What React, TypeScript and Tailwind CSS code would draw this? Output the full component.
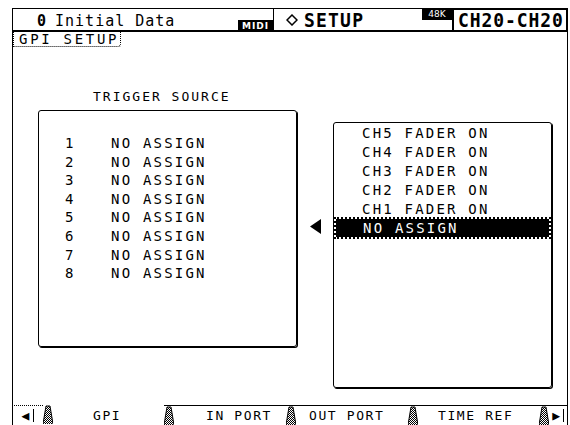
import React from "react";

const sources = [1, 2, 3, 4, 5, 6, 7, 8];
const options = ["CH5 FADER ON", "CH4 FADER ON", "CH3 FADER ON", "CH2 FADER ON", "CH1 FADER ON"];

const Hatch = () => (
  <svg width="10" height="19" viewBox="0 0 10 19" className="shrink-0">
    <defs>
      <pattern id="chk" width="2" height="2" patternUnits="userSpaceOnUse">
        <rect width="1" height="1" fill="#000" />
        <rect x="1" y="1" width="1" height="1" fill="#000" />
      </pattern>
    </defs>
    <polygon points="3,1 7,1 10,19 0,19" fill="url(#chk)" />
    <polyline points="0,19 3,1 7,1 10,19" fill="none" stroke="#000" strokeWidth="1" />
  </svg>
);

const Tab = ({ label, w, pl, active }: { label: string; w: string; pl: string; active?: boolean }) => (
  <div className={`${w} ${pl} flex h-full items-center border-t ${active ? "border-transparent" : "border-black"}`}>
    <span className="text-[13px] leading-none tracking-[1.6px] whitespace-nowrap">{label}</span>
  </div>
);

export default function App() {
  return (
    <div className="w-[570px] h-[425px] bg-white text-black overflow-hidden pl-3 pt-2 flex flex-col font-['DejaVu_Sans_Mono',monospace]">
      {/* header */}
      <div className="flex h-6 w-[556px] shrink-0">
        <div className="w-[262px] border-l border-t border-r border-b-2 border-black flex items-end justify-between">
          <div className="flex items-baseline pl-[24px] pb-[1px] leading-none">
            <span className="text-[15px] font-bold">0</span>
            <span className="ml-[9px] text-[15px] tracking-[1px]">Initial Data</span>
          </div>
          <div className="bg-black text-white h-[12px] w-[35px] flex items-end justify-center mb-[-2px]">
            <span className="text-[9px] font-bold leading-none tracking-[1px] pb-[1px] font-['DejaVu_Sans',sans-serif]">MIDI</span>
          </div>
        </div>
        <div className="w-[148px] border-t border-b-2 border-black flex items-center pl-[12px]">
          <svg width="12" height="12" viewBox="0 0 12 12" className="mr-[6px]">
            <polygon points="6,1 11,6 6,11 1,6" fill="none" stroke="#000" strokeWidth="1.5" />
          </svg>
          <span className="text-[18px] font-bold leading-none tracking-[1.2px] scale-y-110">SETUP</span>
        </div>
        <div className="w-[30px] border-b-2 border-black flex flex-col">
          <div className="bg-black text-white h-[12px] flex items-center justify-center">
            <span className="text-[9px] leading-none font-['DejaVu_Sans',sans-serif]">48K</span>
          </div>
        </div>
        <div className="w-[116px] border-2 border-black flex items-center pl-[4px] overflow-hidden">
          <span className="text-[18px] font-bold leading-none tracking-[0.9px] scale-y-110 whitespace-nowrap">CH20-CH20</span>
        </div>
      </div>

      {/* page frame */}
      <div className="w-[556px] flex-1 border-l border-r border-black flex flex-col">
        <div className="flex shrink-0">
          <div className="h-[15px] w-[108px] pl-[5px] border-b border-r border-l border-dotted border-black rounded-br-[3px] flex items-center">
            <span className="text-[14px] leading-none tracking-[2.7px] whitespace-nowrap">GPI SETUP</span>
          </div>
        </div>

        <div className="flex flex-1 items-start">
          {/* trigger source */}
          <div className="ml-[25px] mt-[43px] flex flex-col">
            <div className="h-[14px] pl-[55px] text-[13px] leading-[14px] tracking-[2px] whitespace-nowrap">TRIGGER SOURCE</div>
            <div className="mt-[6px] w-[259px] h-[237px] border border-black rounded-[3px] shadow-[1px_1px_0_#000] pt-[23px]">
              {sources.map((n) => (
                <div key={n} className="h-[18.6px] flex items-center text-[14px] leading-[18.6px]">
                  <span className="w-[72px] pl-[26px]">{n}</span>
                  <span className="tracking-[2.2px] whitespace-nowrap">NO ASSIGN</span>
                </div>
              ))}
            </div>
          </div>

          {/* arrow + option list */}
          <div className="ml-[13px] mt-[75px] flex items-start">
            <div className="mt-[97px] w-[23px] flex">
              <svg width="11" height="15" viewBox="0 0 11 15">
                <polygon points="11,0 11,15 0,7.5" fill="#000" />
              </svg>
            </div>
            <div className="w-[219px] h-[266px] border border-black rounded-[3px] shadow-[1px_1px_0_#000] pt-[1px] px-[1px]">
              {options.map((o) => (
                <div key={o} className="h-[19px] flex items-center pl-[27px] text-[14px] tracking-[2.2px] whitespace-nowrap">
                  {o}
                </div>
              ))}
              <div className="h-[18px] bg-black text-white outline-2 outline-dotted outline-black flex items-center pl-[27px] text-[14px] tracking-[2.2px] mx-[1px] whitespace-nowrap">
                NO ASSIGN
              </div>
            </div>
          </div>
        </div>

        {/* tab bar */}
        <div className="h-5 -ml-px -mr-px flex items-stretch shrink-0">
          <div className="w-[31px] border-t border-black border-l border-l-black border-dotted flex items-center justify-center">
            <span className="text-[13px] leading-none">◀</span>
            <span className="ml-[4px] h-[13px] w-px bg-black" />
          </div>
          <Hatch />
          <Tab label="GPI" w="w-[111px]" pl="pl-[40px]" active />
          <div className="border-t border-black flex items-stretch"><Hatch /></div>
          <Tab label="IN PORT" w="w-[112px]" pl="pl-[32px]" />
          <div className="border-t border-black flex items-stretch"><Hatch /></div>
          <Tab label="OUT PORT" w="w-[112px]" pl="pl-[13px]" />
          <div className="border-t border-black flex items-stretch"><Hatch /></div>
          <Tab label="TIME REF" w="w-[121px]" pl="pl-[20px]" />
          <div className="border-t border-black flex items-stretch"><Hatch /></div>
          <div className="flex-1 border-t border-black flex items-center justify-end pr-[4px]">
            <span className="text-[13px] leading-none">▶</span>
            <span className="ml-[3px] h-[13px] w-px bg-black" />
          </div>
        </div>
      </div>
    </div>
  );
}
